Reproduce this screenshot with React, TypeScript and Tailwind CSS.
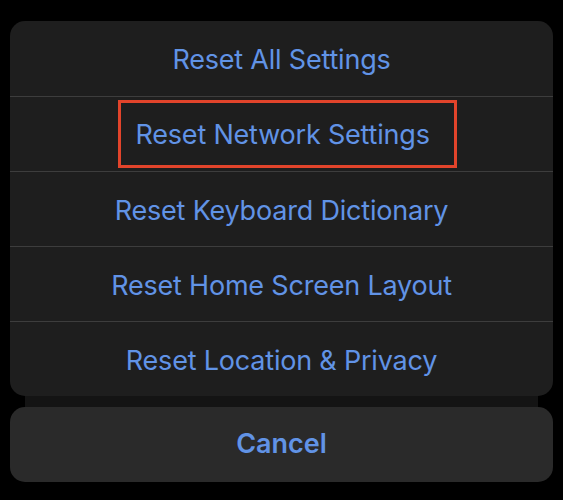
const options = [
  'Reset All Settings',
  'Reset Network Settings',
  'Reset Keyboard Dictionary',
  'Reset Home Screen Layout',
  'Reset Location & Privacy',
]

export default function App() {
  return (
    <div
      className="w-[563px] h-[500px] bg-black pt-[21px] px-[10px] flex flex-col"
      style={{ fontFamily: 'Inter, "Liberation Sans", sans-serif' }}
    >
      <div className="rounded-[15px] bg-[#1e1e1e] overflow-hidden flex flex-col">
        {options.map((label, i) => (
          <div
            key={label}
            className={
              i === 0
                ? 'h-[75px] flex items-center justify-center pt-[4px]'
                : i === 1
                  ? 'h-[75px] flex items-center justify-center pl-[11px] border-t border-[#3d3d3d]'
                  : 'h-[75px] flex items-center justify-center pt-[4px] border-t border-[#3d3d3d]'
            }
          >
            {i === 1 ? (
              <div className="w-[339px] h-[68px] border-[3px] border-[#e2442b] flex items-center pl-[15px] pt-[2px]">
                <span className="text-[27px] text-[#6193e6] tracking-[-0.2px]">{label}</span>
              </div>
            ) : (
              <span className="text-[27px] text-[#6193e6] tracking-[-0.2px]">{label}</span>
            )}
          </div>
        ))}
      </div>
      <div className="h-[11px] mx-[15px] bg-[#141414]" />
      <div className="h-[75px] rounded-[15px] bg-[#2a2a2a] flex items-center justify-center">
        <span className="text-[27px] font-semibold text-[#6193e6]">Cancel</span>
      </div>
    </div>
  )
}
